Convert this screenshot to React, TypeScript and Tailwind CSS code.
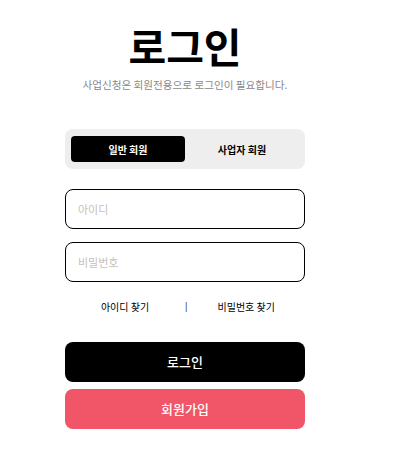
import { useState } from 'react';

export default function App() {
  const [tab, setTab] = useState<'personal' | 'business'>('personal');

  return (
    <div className="min-h-[456px] bg-white" style={{ fontFamily: '"Noto Sans CJK KR", "Noto Sans", sans-serif' }}>
      <div className="ml-[65px] w-[240px] pt-[15px]">
        <h1 className="text-center text-[41px] font-bold leading-[60px] text-black">로그인</h1>
        <p className="mt-[2px] text-center text-[10.6px] leading-[16px] text-[#888]">사업신청은 회원전용으로 로그인이 필요합니다.</p>

        <div className="mt-[36px] flex h-[40px] items-center rounded-[8px] bg-[#eeeeee] px-[6px]">
          <button
            onClick={() => setTab('personal')}
            className={`h-[26px] w-[114px] rounded-[4px] text-[10px] font-bold ${tab === 'personal' ? 'bg-black text-white' : 'text-black'}`}
          >
            일반 회원
          </button>
          <button
            onClick={() => setTab('business')}
            className={`h-[26px] flex-1 rounded-[4px] text-[10px] font-bold ${tab === 'business' ? 'bg-black text-white' : 'text-black'}`}
          >
            사업자 회원
          </button>
        </div>

        <div className="mt-[20px] flex flex-col gap-[13px]">
          <input
            placeholder="아이디"
            className="h-[40px] w-full rounded-[8px] border border-black px-[12px] text-[11px] outline-none placeholder:text-[#c8c0bc]"
          />
          <input
            type="password"
            placeholder="비밀번호"
            className="h-[40px] w-full rounded-[8px] border border-black px-[12px] text-[11px] outline-none placeholder:text-[#c8c0bc]"
          />
        </div>

        <div className="mt-[17px] flex items-center text-[10px] text-black">
          <span className="w-[120px] text-center">아이디 찾기</span>
          <span className="text-[9px]">|</span>
          <span className="flex-1 text-center">비밀번호 찾기</span>
        </div>

        <div className="mt-[28px] flex flex-col gap-[7px]">
          <button className="h-[40px] w-full rounded-[8px] bg-black text-[13px] font-medium text-white">로그인</button>
          <button className="h-[40px] w-full rounded-[8px] bg-[#f05568] text-[13px] font-medium text-white">회원가입</button>
        </div>
      </div>
    </div>
  );
}
